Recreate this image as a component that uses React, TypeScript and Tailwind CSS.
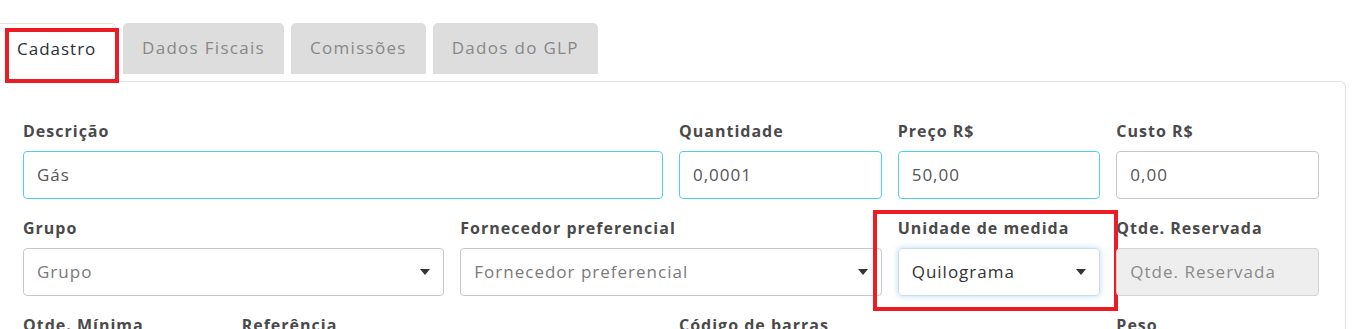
import React from "react";

const font = { fontFamily: "'Open Sans', 'Liberation Sans', sans-serif" };

function Caret() {
  return (
    <svg width="10" height="6" viewBox="0 0 10 6" className="absolute right-[13px] top-1/2 -translate-y-1/2">
      <path d="M0 0 L10 0 L5 6 Z" fill="#333" />
    </svg>
  );
}

function Field({
  label,
  span,
  children,
  outline,
}: {
  label: string;
  span: string;
  children?: React.ReactNode;
  outline?: boolean;
}) {
  return (
    <div className={`relative ${span}`}>
      {outline && (
        <div className="absolute -left-[25px] -right-[18px] -top-[8px] -bottom-[15px] border-4 border-[#ec1c24] pointer-events-none" />
      )}
      <div className="h-5 leading-5 text-[16px] font-bold text-[#4a4a4a] tracking-[1px] whitespace-nowrap">{label}</div>
      {children && <div className="mt-[10px]">{children}</div>}
    </div>
  );
}

function Input({ value, tone = "plain" }: { value: string; tone?: "teal" | "plain" | "muted" }) {
  const cls =
    tone === "teal"
      ? "border-[#4fd1de] text-[#555]"
      : tone === "muted"
      ? "border-[#d4d4d4] bg-[#eeeeee] text-[#8a8a8a]"
      : "border-[#c8c8c8] text-[#555]";
  return (
    <div className={`h-12 rounded-[4px] border flex items-center px-[13px] text-[17px] tracking-[1px] ${cls}`}>
      {value}
    </div>
  );
}

function Select({ value, placeholder, focus }: { value: string; placeholder?: boolean; focus?: boolean }) {
  return (
    <div
      className={`relative h-12 rounded-[4px] border flex items-center px-[13px] text-[17px] tracking-[1px] ${
        focus
          ? "border-[#cfdbe6] shadow-[0_0_6px_rgba(102,175,233,0.45)]"
          : "border-[#c8c8c8]"
      } ${placeholder ? "text-[#7a7a7a]" : "text-[#333]"}`}
    >
      {value}
      <Caret />
    </div>
  );
}

export default function App() {
  return (
    <div className="bg-white w-[1355px] h-[329px] overflow-hidden" style={font}>
      <div className="pt-[23px] pr-[9px]">
        {/* Tabs */}
        <div className="relative z-10 flex items-start gap-[7px] h-[59px]">
          <div className="relative h-[59px] w-[116px] bg-white border-t border-r border-[#e2e2e2] rounded-tr-[5px] flex items-start pl-[17px] pt-[12px] text-[17px] tracking-[1px] text-[#2a2f3a]">
            <div className="absolute left-[5px] top-[4px] w-[114px] h-[55px] border-4 border-[#ec1c24]" />
            Cadastro
          </div>
          <div className="h-[51px] px-[19px] bg-[#dddddd] rounded-t-[5px] flex items-start pt-[12px] text-[17px] tracking-[1.3px] text-[#888]">Dados Fiscais</div>
          <div className="h-[51px] px-[19px] bg-[#dddddd] rounded-t-[5px] flex items-start pt-[12px] text-[17px] tracking-[1.3px] text-[#888]">Comissões</div>
          <div className="h-[51px] px-[19px] bg-[#dddddd] rounded-t-[5px] flex items-start pt-[12px] text-[17px] tracking-[1.3px] text-[#888]">Dados do GLP</div>
        </div>

        {/* Panel */}
        <div className="-mt-px border-t border-r border-[#e2e2e2] rounded-tr-[6px] pl-[23px] pr-[26px] pt-[39px] h-[300px]">
          <div className="grid grid-cols-6 gap-x-4 gap-y-[19px]">
            <Field label="Descrição" span="col-span-3">
              <Input value="Gás" tone="teal" />
            </Field>
            <Field label="Quantidade" span="col-span-1">
              <Input value="0,0001" tone="teal" />
            </Field>
            <Field label="Preço R$" span="col-span-1">
              <Input value="50,00" tone="teal" />
            </Field>
            <Field label="Custo R$" span="col-span-1">
              <Input value="0,00" />
            </Field>

            <Field label="Grupo" span="col-span-2">
              <Select value="Grupo" placeholder />
            </Field>
            <Field label="Fornecedor preferencial" span="col-span-2">
              <Select value="Fornecedor preferencial" placeholder />
            </Field>
            <Field label="Unidade de medida" span="col-span-1" outline>
              <Select value="Quilograma" focus />
            </Field>
            <Field label="Qtde. Reservada" span="col-span-1">
              <Input value="Qtde. Reservada" tone="muted" />
            </Field>

            <Field label="Qtde. Mínima" span="col-span-1" />
            <Field label="Referência" span="col-span-2" />
            <Field label="Código de barras" span="col-span-2" />
            <Field label="Peso" span="col-span-1" />
          </div>
        </div>
      </div>
    </div>
  );
}
